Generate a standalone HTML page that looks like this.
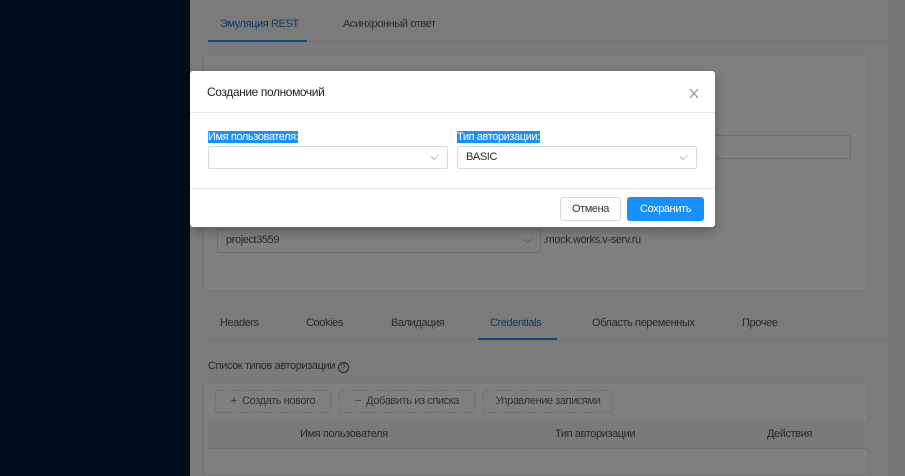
<!DOCTYPE html>
<html><head><meta charset="utf-8"><style>
*{box-sizing:border-box;margin:0;padding:0}
body{width:905px;height:476px;overflow:hidden;background:#7b7b7b;font-family:"Liberation Sans","Noto Sans CJK SC",sans-serif;font-size:11px;letter-spacing:-0.4px;position:relative;color:#2a2a2a}
.a{position:absolute}
.side{left:0;top:0;width:190px;height:476px;background:#010e1b}
.t{color:#2a2a2a;font-size:11px;white-space:nowrap}
.dash{border:1px dashed #6f6f6f;border-radius:2px;height:23px;line-height:21px;text-align:center;color:#333}
.modal{left:190px;top:71px;width:525px;height:156px;background:#fff;border-radius:3px;box-shadow:0 4px 12px rgba(0,0,0,.3)}
.inp{border:1px solid #d9d9d9;border-radius:2px;height:23px;background:#fff}
.hl{background:#1890ff;color:#fff;font-size:11px}
.chev{position:absolute;right:9px;top:6px;width:6px;height:6px;border-right:1px solid #bbb;border-bottom:1px solid #bbb;transform:rotate(45deg) scale(.8,1.2)}
</style></head><body>
<div class="a side"></div>
<div class="a" style="left:888px;top:0;width:17px;height:476px;background:#787878"></div>
<div class="a t" style="left:220px;top:18px;color:#0d3c66">Эмуляция REST</div>
<div class="a t" style="left:343px;top:18px">Асинхронный ответ</div>
<div class="a" style="left:208px;top:41px;width:680px;height:1px;background:#747474"></div>
<div class="a" style="left:208px;top:40px;width:99px;height:2px;background:#0d4a85"></div>
<div class="a" style="left:203px;top:55px;width:665px;height:236px;background:#808080;border:1px solid #767676"></div>
<div class="a inp" style="left:627px;top:135px;width:224px;height:24px;background:#808080;border-color:#6f6f6f"></div>
<div class="a inp" style="left:217px;top:229px;width:324px;height:24px;background:#808080;border-color:#6f6f6f"><div class="chev" style="border-color:#666"></div></div>
<div class="a t" style="left:226px;top:234px">project3559</div>
<div class="a t" style="left:543px;top:234px">.mock.works.v-serv.ru</div>
<div class="a t" style="left:220px;top:317px">Headers</div>
<div class="a t" style="left:306px;top:317px">Cookies</div>
<div class="a t" style="left:391px;top:317px">Валидация</div>
<div class="a t" style="left:490px;top:317px;color:#0d3c66">Credentials</div>
<div class="a t" style="left:592px;top:317px">Область переменных</div>
<div class="a t" style="left:742px;top:317px">Прочее</div>
<div class="a" style="left:203px;top:340px;width:685px;height:1px;background:#747474"></div>
<div class="a" style="left:478px;top:338px;width:79px;height:2px;background:#0d4a85"></div>
<div class="a t" style="left:208px;top:360px">Список типов авторизации <span style="display:inline-block;width:11px;height:11px;border:1px solid #222;border-radius:50%;font-size:8px;line-height:9px;text-align:center;vertical-align:-1px;letter-spacing:0">?</span></div>
<div class="a" style="left:203px;top:383px;width:665px;height:93px;background:#808080;border:1px solid #767676"></div>
<div class="a dash" style="left:215px;top:390px;width:116px">+&nbsp; Создать нового</div>
<div class="a dash" style="left:339px;top:390px;width:136px">−&nbsp; Добавить из списка</div>
<div class="a dash" style="left:483px;top:390px;width:130px">Управление записями</div>
<div class="a" style="left:208px;top:421px;width:660px;height:28px;background:#7a7a7a;border-bottom:1px solid #727272"></div>
<div class="a t" style="left:300px;top:428px">Имя пользователя</div>
<div class="a t" style="left:555px;top:428px">Тип авторизации</div>
<div class="a t" style="left:767px;top:428px">Действия</div>

<div class="a modal">
<div class="a t" style="left:17px;top:14px;font-size:12px;color:#222">Создание полномочий</div>
<svg class="a" style="left:499px;top:17px" width="10" height="11" viewBox="0 0 10 11"><path d="M1 1L9 10M9 1L1 10" stroke="#888" stroke-width="1" fill="none"/></svg>
<div class="a" style="left:0;top:41px;width:525px;height:1px;background:#e8e8e8"></div>
<div class="a" style="left:18px;top:60px"><span class="hl">Имя пользователя:</span></div>
<div class="a" style="left:267px;top:60px"><span class="hl">Тип авторизации:</span></div>
<div class="a inp" style="left:18px;top:75px;width:240px"><div class="chev"></div></div>
<div class="a inp" style="left:267px;top:75px;width:240px"><span class="a t" style="left:8px;top:4px;font-size:11px">BASIC</span><div class="chev"></div></div>
<div class="a" style="left:0;top:117px;width:525px;height:1px;background:#e8e8e8"></div>
<div class="a" style="left:370px;top:126px;width:61px;height:24px;border:1px solid #d9d9d9;border-radius:3px;text-align:center;line-height:22px;color:#333">Отмена</div>
<div class="a" style="left:437px;top:126px;width:77px;height:24px;background:#1890ff;border-radius:3px;text-align:center;line-height:24px;color:#fff">Сохранить</div>
</div>
</body></html>
